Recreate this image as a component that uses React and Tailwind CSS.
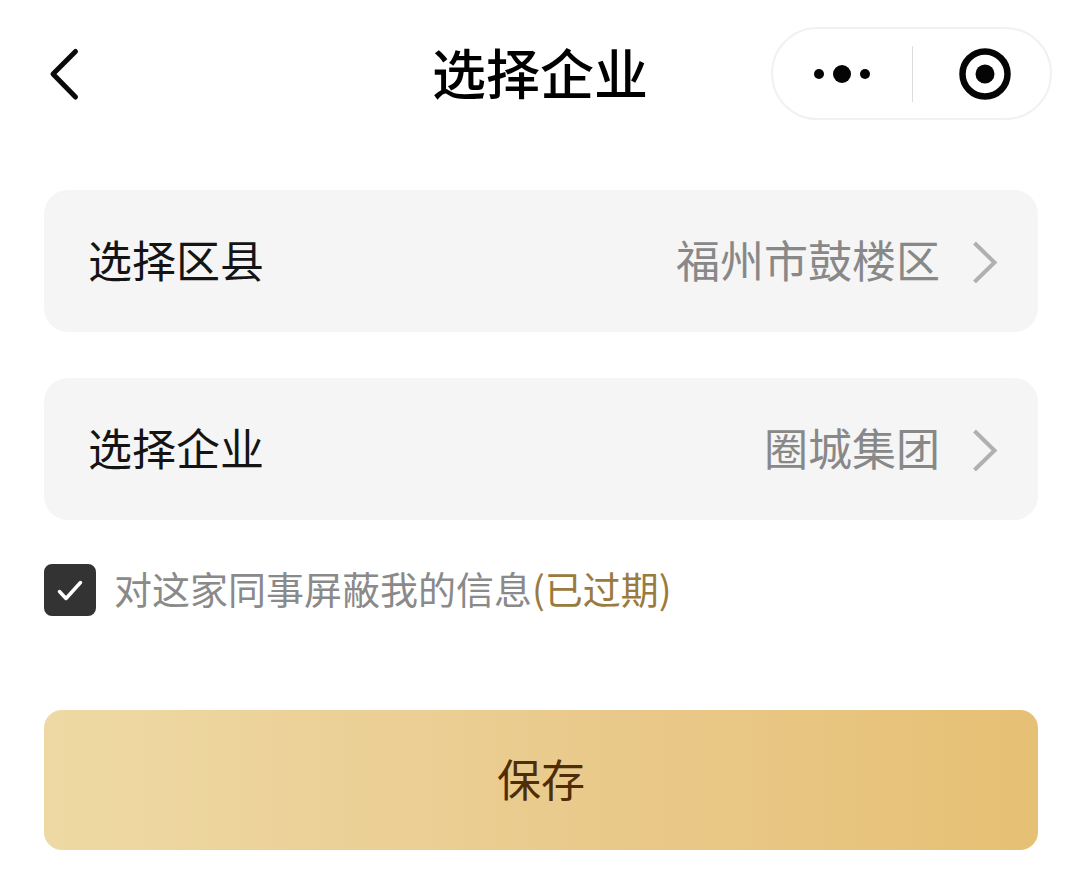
import React, { useState } from 'react';

const rows = [
    { id: 'district', label: '选择区县', value: '福州市鼓楼区' },
    { id: 'company', label: '选择企业', value: '圈城集团' },
];

const Header = () => (
    <header className="grid grid-cols-[1fr_auto_1fr] items-center px-7 pt-[27px]">
        <button type="button" aria-label="返回" className="justify-self-start pl-5 py-4">
            <svg className="w-8 h-14" viewBox="0 0 32 56" fill="none" stroke="#0a0a0a" strokeWidth="5" strokeLinecap="round" strokeLinejoin="round">
                <path d="M27.5 5.5 L5 28 L27.5 51" />
            </svg>
        </button>
        <h1 className="pb-1 text-[54px] leading-[80px] font-medium text-black">选择企业</h1>
        <div className="justify-self-end flex items-center w-[281px] h-[93px] border-2 border-[#f1f1f1] rounded-full">
            <button type="button" aria-label="更多" className="w-1/2 flex justify-center">
                <svg className="w-15 h-6" viewBox="0 0 60 24" fill="#050505">
                    <circle cx="7" cy="12" r="5" />
                    <circle cx="30" cy="12" r="9" />
                    <circle cx="53" cy="12" r="5" />
                </svg>
            </button>
            <span className="w-px h-14 bg-[#dcdcdc]" />
            <button type="button" aria-label="关闭" className="flex-1 flex justify-center pl-2">
                <svg className="w-[54px] h-[54px]" viewBox="0 0 54 54">
                    <circle cx="27" cy="27" r="22.5" fill="none" stroke="#050505" strokeWidth="6.5" />
                    <circle cx="27" cy="27" r="9.5" fill="#050505" />
                </svg>
            </button>
        </div>
    </header>
);

const SelectRow = ({ label, value }) => (
    <button type="button" className="flex items-center w-full py-[42px] pl-11 pr-10 rounded-3xl bg-[#f5f5f5] text-[44px] leading-[54px]">
        <span className="pb-1 text-[#141414]">{label}</span>
        <span className="pb-1 ml-auto text-[#888888]">{value}</span>
        <svg className="w-[26px] h-11 ml-8" viewBox="0 0 26 44" fill="none" stroke="#b0b0b0" strokeWidth="4">
            <path d="M2.5 4 L22.5 23.5 L2.5 43" />
        </svg>
    </button>
);

const App = () => {
    const [blocked, setBlocked] = useState(true);

    return (
        <div className="bg-white font-['Noto_Sans_CJK_SC',sans-serif]">
            <Header />
            <main className="pl-11 pr-[42px] pt-[70px] pb-9">
                <div className="flex flex-col gap-[46px]">
                    {rows.map(row => (
                        <SelectRow key={row.id} label={row.label} value={row.value} />
                    ))}
                </div>

                <label className="flex items-center gap-[18px] mt-11 text-[38px] leading-[48px] text-[#8a8a8a]">
                    <span className="relative flex shrink-0">
                        <input
                            type="checkbox"
                            checked={blocked}
                            onChange={e => setBlocked(e.target.checked)}
                            className="peer appearance-none w-[52px] h-[52px] rounded-lg border-2 border-[#333333] checked:bg-[#333333]"
                        />
                        <svg className="absolute inset-0 w-full h-full pointer-events-none invisible peer-checked:visible" viewBox="0 0 52 52" fill="none" stroke="#ffffff" strokeWidth="3.5" strokeLinecap="round" strokeLinejoin="round">
                            <path d="M15.5 27.5 L22 34.5 L36.5 18.5" />
                        </svg>
                    </span>
                    <span className="pb-1">
                        对这家同事屏蔽我的信息<span className="text-[#9a7b3f]">(已过期)</span>
                    </span>
                </label>

                <button
                    type="button"
                    className="w-full mt-[94px] pt-[41px] pb-[45px] rounded-[18px] bg-linear-to-r from-[#eed9a4] via-[#eacb8e] to-[#e6c074] text-[44px] leading-[54px] text-[#4f2d06]"
                >
                    保存
                </button>
            </main>
        </div>
    );
};

export default App;
